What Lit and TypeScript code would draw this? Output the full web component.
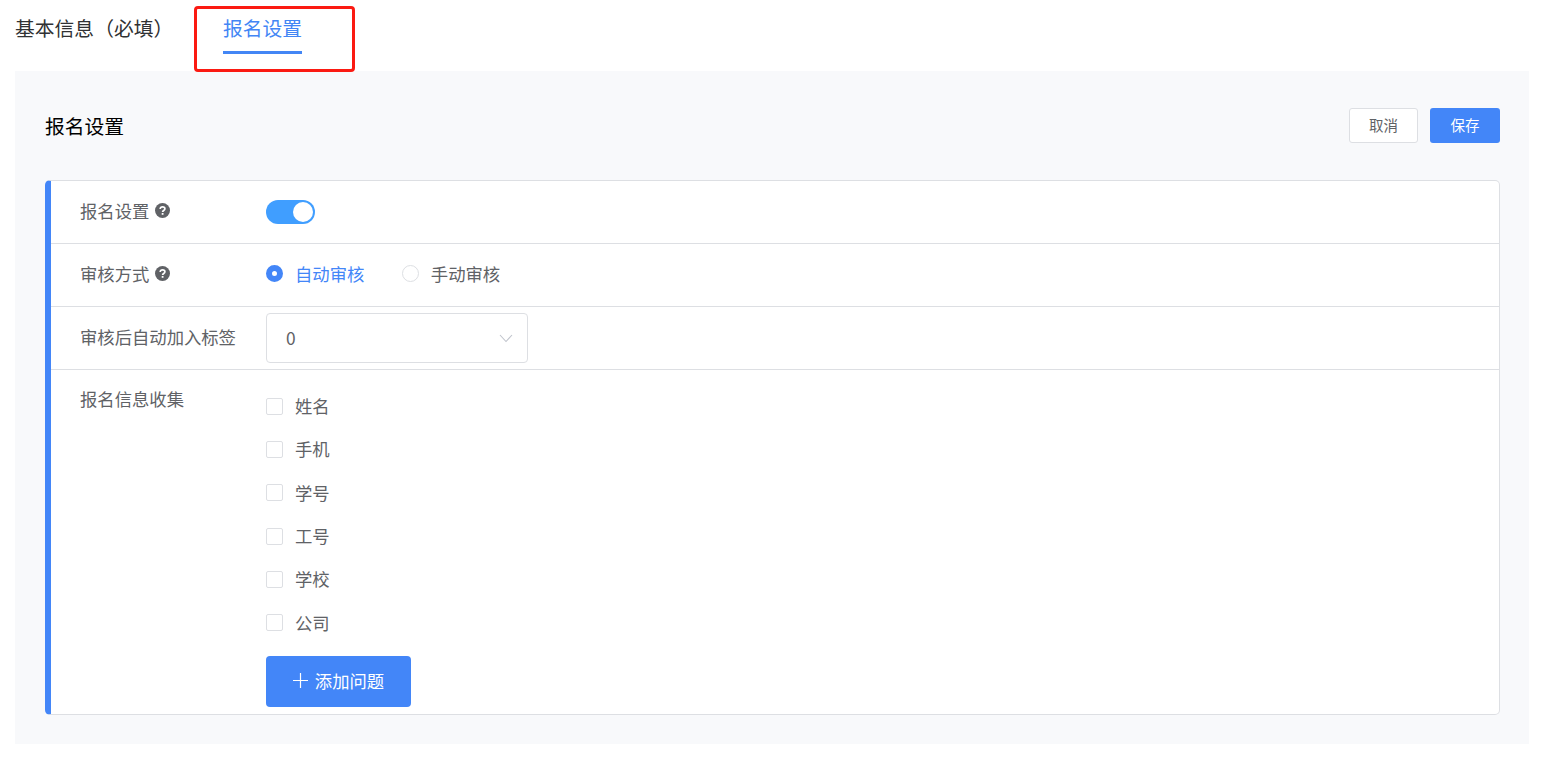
import { LitElement, html, css, svg } from "lit";
import { customElement } from "lit/decorators.js";

const help = html`<svg class="help" viewBox="0 0 15 15" aria-hidden="true">
  <circle cx="7.5" cy="7.5" r="7.5" fill="#606266"></circle>
  <path d="M5.2 6c0-1.4 1-2.2 2.3-2.2S9.9 4.600 9.900 5.800c0 1.700-2.300 1.600-2.300 3.200" fill="none" stroke="#fff" stroke-width="1.700"></path>
  <rect x="6.700" y="10" width="1.800" height="1.800" fill="#fff"></rect>
</svg>`;

const chevron = svg`<path d="M1 1l6 6.500L13 1" fill="none" stroke="#c0c4cc" stroke-width="1.100"></path>`;

@customElement("app-root")
export class AppRoot extends LitElement {
  static styles = css`
    :host {
      display: block;
      width: 1550px;
      height: 778px;
      background: #fff;
      box-sizing: border-box;
      padding: 0 21px 0 15px;
      font-family: "Noto Sans CJK SC", "Liberation Sans", sans-serif;
      color: #606266;
      font-size: 17.33px;
      position: relative;
      overflow: hidden;
    }
    .tabs {
      display: flex;
      height: 71px;
      gap: 48px;
      font-size: 19.8px;
      color: #303133;
    }
    .tab {
      height: 54px;
      box-sizing: border-box;
      padding-top: 12px;
      line-height: 32px;
    }
    .tab.first {
      width: 160px;
      white-space: nowrap;
    }
    .tab.on {
      color: #4386f5;
      border-bottom: 3px solid #4386f5;
    }
    .mark {
      position: absolute;
      left: 194px;
      top: 6px;
      width: 161px;
      height: 66px;
      box-sizing: border-box;
      border: 3px solid #fb1a12;
      border-radius: 4px;
    }
    .panel {
      background: #f8f9fb;
      height: 673px;
      box-sizing: border-box;
      padding: 37px 29px 29px 30px;
    }
    .head {
      display: flex;
      justify-content: space-between;
      align-items: center;
      height: 35px;
      margin-bottom: 37px;
    }
    .title {
      font-size: 19.8px;
      color: #000;
    }
    .actions {
      display: flex;
      gap: 12px;
    }
    .btn {
      height: 35px;
      box-sizing: border-box;
      border-radius: 3px;
      font-size: 14.5px;
      padding-bottom: 3px;
      display: flex;
      align-items: center;
      justify-content: center;
    }
    .btn.ghost {
      width: 69px;
      background: #fff;
      border: 1px solid #dddfe3;
      color: #606266;
    }
    .btn.primary {
      width: 70px;
      background: #4386f8;
      color: #fff;
    }
    .card {
      background: #fff;
      height: 535px;
      box-sizing: border-box;
      border: 1px solid #dddfe3;
      border-left: 6px solid #4386f8;
      border-radius: 5px;
    }
    .row {
      display: flex;
      align-items: center;
      height: 63px;
      box-sizing: border-box;
      border-bottom: 1px solid #dddfe3;
    }
    .label {
      width: 215px;
      box-sizing: border-box;
      padding: 0 0 3px 29px;
      flex: none;
      display: flex;
      align-items: center;
      gap: 6px;
      line-height: 24px;
      white-space: nowrap;
    }
    .help {
      width: 15px;
      height: 15px;
      flex: none;
    }
    .switch {
      width: 49px;
      height: 24px;
      border-radius: 12px;
      background: #409eff;
      display: flex;
      justify-content: flex-end;
      align-items: center;
      padding-right: 2px;
      box-sizing: border-box;
    }
    .knob {
      width: 20px;
      height: 20px;
      border-radius: 50%;
      background: #fff;
    }
    .radios {
      display: flex;
      align-items: center;
      padding-bottom: 3px;
    }
    .radio {
      display: flex;
      align-items: center;
      gap: 12px;
      margin-right: 37.5px;
    }
    .radio.on { color: #4386f8; }
    .dot {
      width: 17px;
      height: 17px;
      box-sizing: border-box;
      border-radius: 50%;
      border: 1px solid #dddfe3;
      background: #fff;
    }
    .radio.on .dot {
      border: 6px solid #4386f8;
    }
    .select {
      width: 262px;
      height: 50px;
      box-sizing: border-box;
      border: 1px solid #dddfe3;
      border-radius: 4px;
      display: flex;
      align-items: center;
      justify-content: space-between;
      padding: 0 14px 2px 19px;
    }
    .select svg {
      width: 14px;
      height: 9px;
      margin-top: 2px;
    }
    .row.last {
      border-bottom: 0;
      height: 343px;
      align-items: flex-start;
    }
    .row.last .label { padding-top: 17px; }
    .fields {
      padding-top: 14px;
    }
    .check {
      display: flex;
      align-items: center;
      gap: 12px;
      height: 43.330px;
    }
    .box {
      width: 17px;
      height: 17px;
      box-sizing: border-box;
      border: 1px solid #dddfe3;
      border-radius: 2px;
      background: #fff;
      margin-top: 1px;
    }
    .add {
      margin-top: 12px;
      width: 145px;
      height: 51px;
      box-sizing: border-box;
      padding-bottom: 1px;
      border-radius: 4px;
      background: #4386f8;
      color: #fff;
      display: flex;
      align-items: center;
      justify-content: center;
      gap: 7px;
    }
    .add svg {
      width: 15px;
      height: 15px;
    }
  `;

  render() {
    const fields = ["姓名", "手机", "学号", "工号", "学校", "公司"];
    return html`
      <div class="tabs">
        <div class="tab first">基本信息（必填）</div>
        <div class="tab on">报名设置</div>
      </div>
      <div class="mark"></div>
      <section class="panel">
        <div class="head">
          <div class="title">报名设置</div>
          <div class="actions">
            <div class="btn ghost">取消</div>
            <div class="btn primary">保存</div>
          </div>
        </div>
        <div class="card">
          <div class="row">
            <div class="label">报名设置 ${help}</div>
            <div class="switch"><div class="knob"></div></div>
          </div>
          <div class="row">
            <div class="label">审核方式 ${help}</div>
            <div class="radios">
              <div class="radio on"><span class="dot"></span>自动审核</div>
              <div class="radio"><span class="dot"></span>手动审核</div>
            </div>
          </div>
          <div class="row">
            <div class="label">审核后自动加入标签</div>
            <div class="select">
              <span>0</span>
              <svg viewBox="0 0 14 9" aria-hidden="true">${chevron}</svg>
            </div>
          </div>
          <div class="row last">
            <div class="label">报名信息收集</div>
            <div class="fields">
              ${fields.map((f) => html`<div class="check"><span class="box"></span>${f}</div>`)}
              <div class="add">
                <svg viewBox="0 0 15 15" aria-hidden="true"><path d="M7.500 0v15M0 7.500h15" stroke="#fff" stroke-width="1.200" fill="none"></path></svg>
                添加问题
              </div>
            </div>
          </div>
        </div>
      </section>
    `;
  }
}
